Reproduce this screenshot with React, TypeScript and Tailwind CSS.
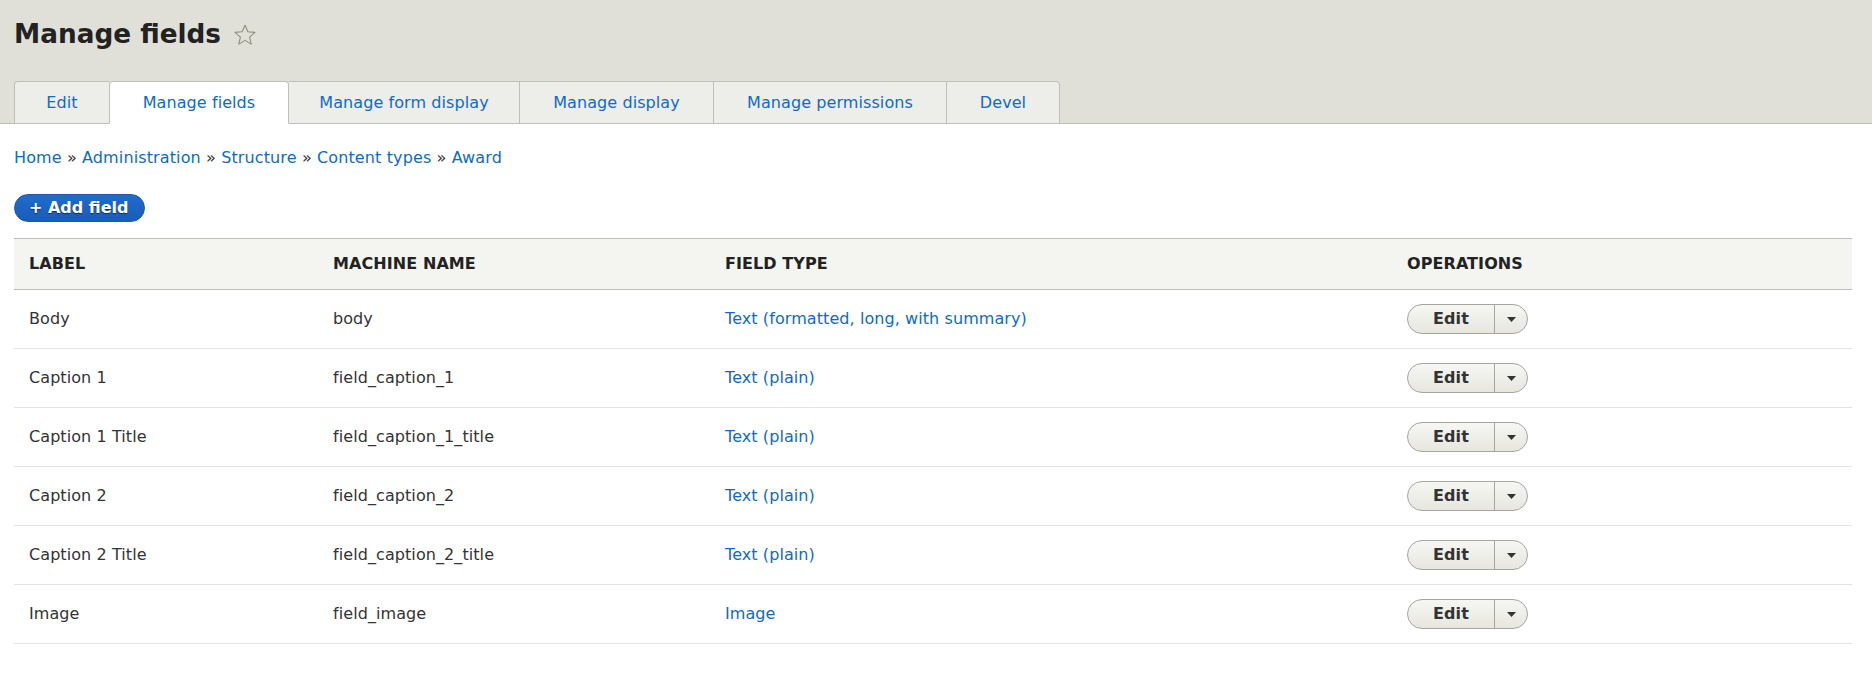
import React from "react";

type Field = {
  label: string;
  machine: string;
  type: string;
};

const FIELDS: Field[] = [
  { label: "Body", machine: "body", type: "Text (formatted, long, with summary)" },
  { label: "Caption 1", machine: "field_caption_1", type: "Text (plain)" },
  { label: "Caption 1 Title", machine: "field_caption_1_title", type: "Text (plain)" },
  { label: "Caption 2", machine: "field_caption_2", type: "Text (plain)" },
  { label: "Caption 2 Title", machine: "field_caption_2_title", type: "Text (plain)" },
  { label: "Image", machine: "field_image", type: "Image" },
];

// tab widths measured from the design
const TABS = [
  { label: "Edit", w: "w-[95px]" },
  { label: "Manage fields", w: "w-[180px]" },
  { label: "Manage form display", w: "w-[230px]" },
  { label: "Manage display", w: "w-[194px]" },
  { label: "Manage permissions", w: "w-[233px]" },
  { label: "Devel", w: "w-[114px]" },
];

const CRUMBS = ["Home", "Administration", "Structure", "Content types", "Award"];

function Star() {
  return (
    <svg width="24" height="24" viewBox="0 0 24 24" className="ml-[12px] mt-[1px]">
      <path
        d="M12 2.2l2.9 6.6 7.1.6-5.4 4.7 1.6 7-6.2-3.7-6.2 3.7 1.6-7L2 9.4l7.1-.6z"
        fill="none"
        stroke="#8e8e7e"
        strokeWidth="1.1"
        strokeLinejoin="round"
      />
    </svg>
  );
}

function DropButton() {
  return (
    <div className="inline-flex h-[30px] items-stretch overflow-hidden rounded-full border border-[#a6a6a0] bg-gradient-to-b from-[#f6f6f3] to-[#e7e7df]">
      <span className="flex w-[86px] items-center justify-center font-bold text-[#333]">
        Edit
      </span>
      <span className="flex w-[33px] items-center justify-center border-l border-[#a6a6a0]">
        <svg width="9" height="5" viewBox="0 0 9 5">
          <path d="M0 0h9L4.5 5z" fill="#333" />
        </svg>
      </span>
    </div>
  );
}

export default function App() {
  return (
    <div className="min-h-screen bg-white text-[16px] tracking-[0.08px] text-[#333] [font-family:'DejaVu_Sans',Verdana,sans-serif]">
      <header className="border-b border-[#bfbfba] bg-[#e0e0d8] pl-[14px] pt-[19px]">
        <div className="flex items-center">
          <h1 className="text-[26.3px] font-bold leading-[30px] tracking-normal text-[#222]">
            Manage fields
          </h1>
          <Star />
        </div>
        <ul className="-mb-px mt-[32px] flex">
          {TABS.map((tab, i) => {
            const active = tab.label === "Manage fields";
            return (
              <li
                key={tab.label}
                className={
                  "flex h-[43px] items-center justify-center border-l border-t border-[#bfbfba] text-[#0f6bc5] " +
                  tab.w +
                  " " +
                  (active ? "rounded-t-[4px] border-r border-b border-b-white bg-white " : "border-b bg-[#ededea] ") +
                  (i === 0 ? "rounded-tl-[4px] " : "") +
                  (i === TABS.length - 1 ? "rounded-tr-[4px] border-r " : "") +
                  (i === 2 ? "border-l-0 " : "")
                }
              >
                {tab.label}
              </li>
            );
          })}
        </ul>
      </header>

      <main className="pl-[14px] pr-[20px]">
        <nav className="pt-[22px] leading-[24px] tracking-[0.12px]">
          {CRUMBS.map((c, i) => (
            <span key={c}>
              {i > 0 && <span className="text-[#333]"> » </span>}
              <a className="text-[#0f6bc5]">{c}</a>
            </span>
          ))}
        </nav>

        <button className="mt-[24px] flex h-[28px] items-center rounded-full border border-[#1e5aa8] bg-gradient-to-b from-[#1f6bcd] to-[#1a5cb9] pl-[14px] pr-[16px] font-bold tracking-normal text-white [text-shadow:0_1px_1px_rgba(0,0,0,0.5)]">
          + Add field
        </button>

        <table className="mt-[16px] w-full table-fixed border-collapse">
          <colgroup>
            <col className="w-[304px]" />
            <col className="w-[392px]" />
            <col className="w-[682px]" />
            <col />
          </colgroup>
          <thead>
            <tr className="h-[51px] border-y border-[#bfbfba] bg-[#f4f4f0] text-left">
              <th className="px-[15px] font-bold uppercase text-[#222]">Label</th>
              <th className="px-[15px] font-bold uppercase text-[#222]">Machine name</th>
              <th className="px-[15px] font-bold uppercase text-[#222]">Field type</th>
              <th className="px-[15px] font-bold uppercase text-[#222]">Operations</th>
            </tr>
          </thead>
          <tbody>
            {FIELDS.map((f) => (
              <tr key={f.machine} className="h-[59px] border-b border-[#e6e4df]">
                <td className="px-[15px]">{f.label}</td>
                <td className="px-[15px]">{f.machine}</td>
                <td className="px-[15px]">
                  <a className="text-[#0f6bc5]">{f.type}</a>
                </td>
                <td className="px-[15px]">
                  <DropButton />
                </td>
              </tr>
            ))}
          </tbody>
        </table>
      </main>
    </div>
  );
}
